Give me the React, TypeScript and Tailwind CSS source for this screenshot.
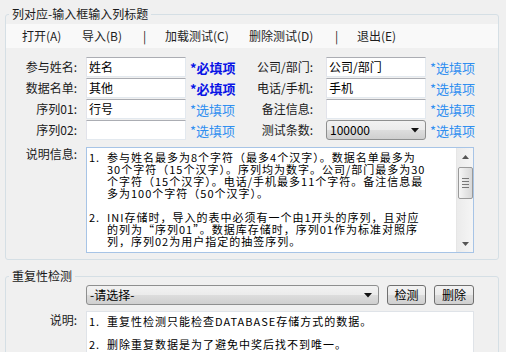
import React from "react";

const FONT = "font-['Noto_Sans_CJK_SC','Noto_Sans',sans-serif]";

function Input({ value }: { value?: string }) {
  return (
    <div className="h-[20px] w-[100px] bg-white border border-[#e3e9ef] border-t-[#abadb3] border-l-[#e2e3ea] pl-[2px] text-[12px] leading-[18px] text-black">
      {value}
    </div>
  );
}

function Arrow() {
  return (
    <svg width="8" height="5" viewBox="0 0 8 5" className="shrink-0">
      <path d="M0 0 H8 L4 4.5 Z" fill="#111" />
    </svg>
  );
}

function Combo({ value, width }: { value: string; width: string }) {
  return (
    <div
      className={`${width} h-[20px] flex items-center justify-between rounded-[3px] border border-[#8e8f8f] bg-[linear-gradient(#f2f2f2,#ebebeb_50%,#dddddd_50%,#cfcfcf)] pl-[3px] pr-[6px] text-[12px] text-black`}
    >
      <span>{value}</span>
      <Arrow />
    </div>
  );
}

function Button({ label, width }: { label: string; width: string }) {
  return (
    <div
      className={`${width} h-[20px] flex items-center justify-center rounded-[3px] border border-[#707070] bg-[linear-gradient(#f2f2f2,#ebebeb_50%,#dddddd_50%,#cfcfcf)] text-[12px] text-black`}
    >
      {label}
    </div>
  );
}

function Must() {
  return <span className="text-[13px] font-bold text-[#0a14e6]">*必填项</span>;
}

function Optional() {
  return <span className="text-[13px] text-[#2f8ef0]">*选填项</span>;
}

function Row({
  label,
  input,
  note,
  label2,
  input2,
}: {
  label: string;
  input: React.ReactNode;
  note: React.ReactNode;
  label2: string;
  input2: React.ReactNode;
}) {
  return (
    <div className="flex h-[20px] items-center">
      <div className="w-[71px] text-right text-[12px] text-[#1a1a1a]">{label}</div>
      <div className="ml-[9px]">{input}</div>
      <div className="ml-[4px] w-[50px] pb-[3px]">{note}</div>
      <div className="w-[73px] text-right text-[12px] text-[#1a1a1a]">{label2}</div>
      <div className="ml-[13px]">{input2}</div>
      <div className="ml-[4px] pb-[3px]">
        <Optional />
      </div>
    </div>
  );
}

function Item({ no, lines }: { no: string; lines: string[] }) {
  return (
    <div className="flex">
      <div className="w-[18px] shrink-0">{no}</div>
      <div>
        {lines.map((l) => (
          <div key={l} className="whitespace-pre">
            {l}
          </div>
        ))}
      </div>
    </div>
  );
}

function Scrollbar() {
  return (
    <div className="w-[17px] shrink-0 flex flex-col items-center bg-[linear-gradient(90deg,#ebebeb,#f5f5f5)] border-l border-[#e6e6e6]">
      <div className="h-[17px] flex items-center justify-center">
        <svg width="7" height="4" viewBox="0 0 7 4">
          <path d="M0 4 L3.5 0 L7 4 Z" fill="#555" />
        </svg>
      </div>
      <div className="mt-[2px] h-[32px] w-[15px] rounded-[2px] border border-[#9a9a9a] bg-[linear-gradient(90deg,#f6f6f6,#e6e6e6_50%,#d8d8d8)] flex flex-col items-center justify-center gap-[2px]">
        <div className="h-px w-[7px] bg-[#777]" />
        <div className="h-px w-[7px] bg-[#777]" />
        <div className="h-px w-[7px] bg-[#777]" />
        <div className="h-px w-[7px] bg-[#777]" />
      </div>
      <div className="flex-1" />
      <div className="h-[17px] flex items-center justify-center">
        <svg width="7" height="4" viewBox="0 0 7 4">
          <path d="M0 0 L7 0 L3.5 4 Z" fill="#555" />
        </svg>
      </div>
    </div>
  );
}

export default function App() {
  return (
    <div className={`w-[506px] h-[352px] overflow-hidden bg-[#f0f0f0] pt-[5px] ${FONT}`}>
      <fieldset className="ml-[5px] w-[494px] rounded-[3px] border border-[#d5dfe5] pb-[6px]">
        <legend className="ml-[3px] px-[3px] text-[12px] leading-[18px] text-[#1a1a1a]">
          列对应-输入框输入列标题
        </legend>
        <div className="mt-[1px] h-[24px] flex items-center bg-[#f9f9f9] pl-[16px] text-[12px] text-[#1e1e1e]">
          <span className="w-[60px]">打开(A)</span>
          <span className="w-[61px]">导入(B)</span>
          <span className="w-[22px]">|</span>
          <span className="w-[84px]">加载测试(C)</span>
          <span className="w-[86px]">删除测试(D)</span>
          <span className="w-[22px]">|</span>
          <span>退出(E)</span>
        </div>

        <div className="mt-[9px] flex flex-col gap-[1px]">
          <Row
            label="参与姓名:"
            input={<Input value="姓名" />}
            note={<Must />}
            label2="公司/部门:"
            input2={<Input value="公司/部门" />}
          />
          <Row
            label="数据名单:"
            input={<Input value="其他" />}
            note={<Must />}
            label2="电话/手机:"
            input2={<Input value="手机" />}
          />
          <Row
            label="序列01:"
            input={<Input value="行号" />}
            note={<Optional />}
            label2="备注信息:"
            input2={<Input />}
          />
          <Row
            label="序列02:"
            input={<Input />}
            note={<Optional />}
            label2="测试条数:"
            input2={<Combo value="100000" width="w-[100px]" />}
          />
        </div>

        <div className="mt-[7px] flex">
          <div className="w-[71px] text-right text-[12px] leading-[14px] text-[#1a1a1a]">说明信息:</div>
          <div className="ml-[9px] h-[106px] w-[388px] flex border border-[#a7c4e6] bg-white overflow-hidden">
            <div className="flex-1 pl-[2px] pt-[3px] text-[11px] leading-[12px] tracking-[1px] text-black">
              <Item
                no="1."
                lines={[
                  "参与姓名最多为8个字符（最多4个汉字）。数据名单最多为",
                  "30个字符（15个汉字）。序列均为数字。公司/部门最多为30",
                  "个字符（15个汉字）。电话/手机最多11个字符。备注信息最",
                  "多为100个字符（50个汉字）。",
                ]}
              />
              <div className="h-[12px]" />
              <Item
                no="2."
                lines={[
                  "INI存储时，导入的表中必须有一个由1开头的序列，且对应",
                  "的列为“序列01”。数据库存储时，序列01作为标准对照序",
                  "列，序列02为用户指定的抽签序列。",
                ]}
              />
            </div>
            <Scrollbar />
          </div>
        </div>
      </fieldset>

      <fieldset className="mt-[7px] ml-[5px] w-[494px] h-[120px] rounded-[3px] border border-[#d5dfe5]">
        <legend className="ml-[3px] px-[3px] text-[12px] leading-[18px] text-[#1a1a1a]">重复性检测</legend>
        <div className="flex items-center">
          <div className="ml-[80px]">
            <Combo value="-请选择-" width="w-[293px]" />
          </div>
          <div className="ml-[8px]">
            <Button label="检测" width="w-[39px]" />
          </div>
          <div className="ml-[8px]">
            <Button label="删除" width="w-[40px]" />
          </div>
        </div>
        <div className="mt-[6px] flex">
          <div className="w-[71px] pt-[2px] text-right text-[12px] leading-[14px] text-[#1a1a1a]">说明:</div>
          <div className="ml-[9px] h-[60px] w-[388px] border border-[#dfe3e8] bg-white pl-[2px] pt-[3px] text-[11px] leading-[12px] tracking-[1px] text-black">
            <Item no="1." lines={["重复性检测只能检查DATABASE存储方式的数据。"]} />
            <div className="h-[11px]" />
            <Item no="2." lines={["删除重复数据是为了避免中奖后找不到唯一。"]} />
          </div>
        </div>
      </fieldset>
    </div>
  );
}
